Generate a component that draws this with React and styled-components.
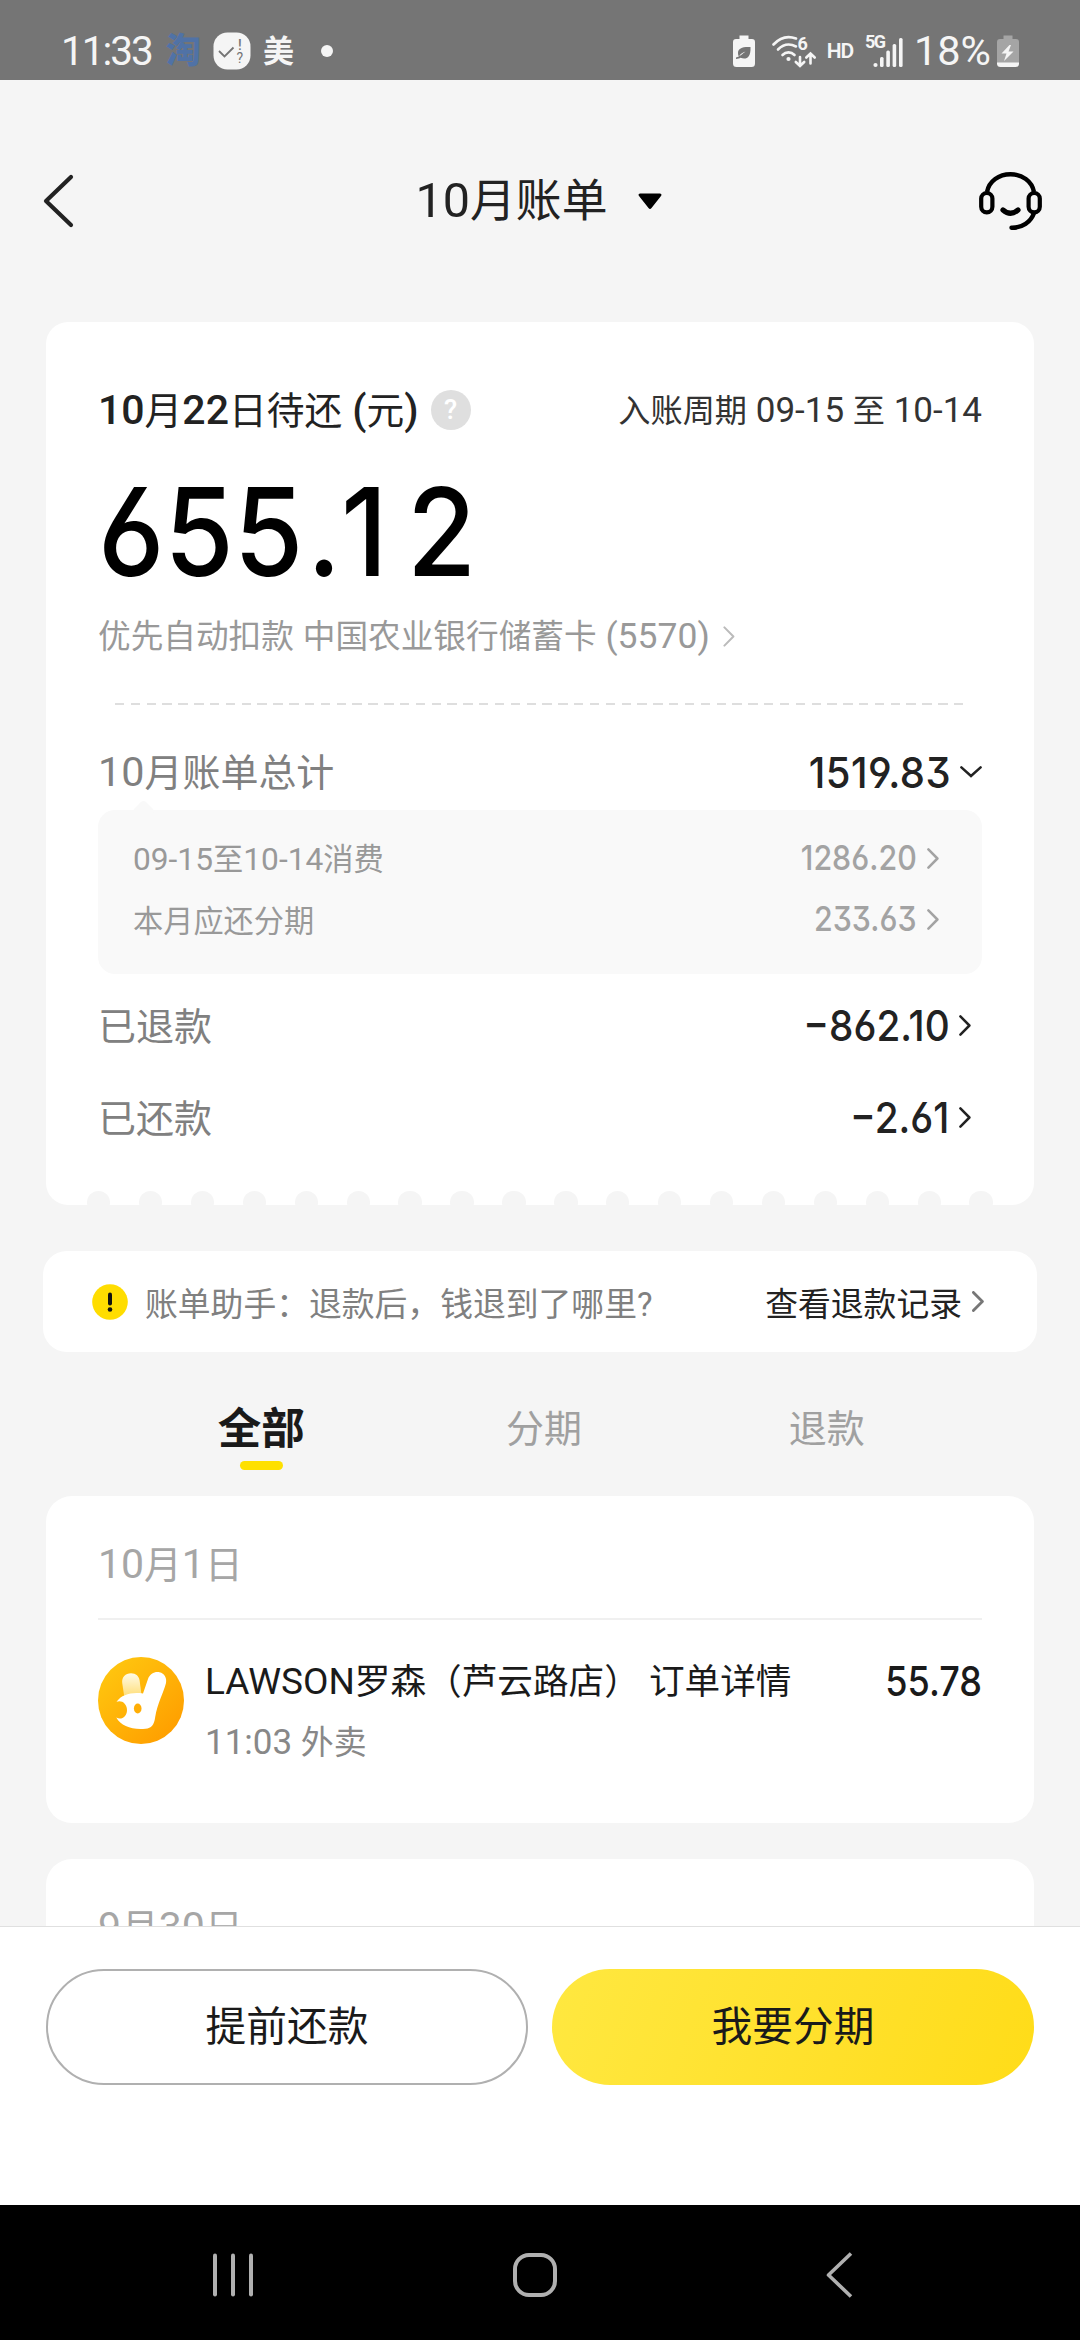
import { useState } from "react";
import styled, { createGlobalStyle } from "styled-components";

const GlobalStyle = createGlobalStyle`
  * {
    box-sizing: border-box;
  }
  body {
    margin: 0;
    background: #f5f5f5;
    font-family: Roboto, "Noto Sans CJK SC", sans-serif;
    color: #222;
  }
  svg {
    display: block;
    flex: none;
  }
`;

const Screen = styled.div`
  width: 1080px;
  height: 2340px;
  display: flex;
  flex-direction: column;
  overflow: hidden;
`;

/* ---------- text ---------- */
const Label = styled.span`
  font-size: ${(props) => props.$size}px;
  font-weight: ${(props) => props.$weight || 400};
  letter-spacing: ${(props) => props.$spacing || 0}px;
  color: ${(props) => props.$color || "#222"};
  padding-top: ${(props) => props.$drop || 0}px;
  line-height: 1.2;
  white-space: pre;
`;
const Han = styled.span`
  font-size: ${(props) => props.$ratio}em;
  font-weight: ${(props) => props.$weight || "inherit"};
`;
const Digits = styled.span`
  font-family: Inter, Roboto, sans-serif;
  font-feature-settings: "ss01";
  font-size: ${(props) => props.$size}px;
  font-weight: ${(props) => props.$weight || 500};
  letter-spacing: ${(props) => props.$spacing || 0}px;
  color: ${(props) => props.$color || "#222"};
  line-height: 1;
  white-space: nowrap;
  transform: scaleX(${(props) => props.$stretch || 0.9});
  transform-origin: right center;
`;
const Total = styled(Digits)`
  transform-origin: left center;
`;
const Cents = styled.span`
  letter-spacing: 21px;
`;
const Point = styled.span`
  margin-left: 4px;
`;

// Chinese runs are set a little smaller than the figures beside them
const Mixed = ({ children, ratio = 0.92, hanWeight, ...rest }) => (
  <Label {...rest}>
    {children.split(/([\u3000-\uffff]+)/).map((part, i) =>
      i % 2 ? (
        <Han key={i} $ratio={ratio} $weight={hanWeight}>
          {part}
        </Han>
      ) : (
        part
      )
    )}
  </Label>
);

/* ---------- status bar ---------- */
const StatusBar = styled.div`
  height: 80px;
  flex: none;
  background: #757575;
  display: flex;
  justify-content: space-between;
  padding: 22px 61px 0 61px;
`;
const StatusSide = styled.div`
  display: flex;
  align-items: center;
  height: 58px;
`;
const StatusText = styled.span`
  font-size: ${(props) => props.$size}px;
  font-weight: ${(props) => props.$weight || 400};
  letter-spacing: ${(props) => props.$spacing || 0}px;
  color: ${(props) => props.$color || "#f5f5f5"};
  line-height: 1;
  margin-left: ${(props) => props.$left || 0}px;
`;
const StatusIcon = styled.svg`
  margin-left: ${(props) => props.$left || 0}px;
`;
const Dot = styled.span`
  width: 12px;
  height: 12px;
  border-radius: 50%;
  background: #f5f5f5;
  margin-left: 27px;
`;

/* ---------- header ---------- */
const Content = styled.div`
  height: 1846px;
  flex: none;
  background: #f5f5f5;
  overflow: hidden;
`;
const Header = styled.div`
  height: 242px;
  display: flex;
  align-items: center;
  justify-content: space-between;
  padding: 0 37px 0 42px;
`;
const Title = styled.div`
  display: flex;
  align-items: center;
  gap: 30px;
  margin-left: 24px;
`;

/* ---------- cards ---------- */
const Card = styled.div`
  margin: 0 46px ${(props) => props.$bottom || 0}px;
  padding: 0 52px;
  background: #fff;
  border-radius: ${(props) => props.$radius}px;
  height: ${(props) => props.$height}px;
`;
const BillCard = styled(Card)`
  display: flex;
  flex-direction: column;
`;
const Row = styled.div`
  display: flex;
  align-items: center;
  flex: none;
  justify-content: space-between;
  height: ${(props) => props.$height}px;
  margin-top: ${(props) => props.$top || 0}px;
`;
const Inline = styled.div`
  display: flex;
  align-items: center;
  gap: ${(props) => props.$gap}px;
  padding-right: ${(props) => props.$right || 0}px;
`;
const Help = styled.span`
  width: 40px;
  height: 40px;
  border-radius: 50%;
  background: #dfdfdf;
  color: #fff;
  display: flex;
  align-items: center;
  justify-content: center;
  font-size: 27px;
  font-weight: 500;
  line-height: 1;
`;
const Dashes = styled.div`
  flex: none;
  height: 2px;
  width: 850px;
  margin: 45px 0 0 17px;
  background: repeating-linear-gradient(
    90deg,
    #dedede 0 9.4px,
    transparent 9.4px 15.83px
  );
`;
const Detail = styled.div`
  flex: none;
  position: relative;
  height: 164px;
  border-radius: 17px;
  background: #f9f9f9;
  padding: 18px 43px 0 35px;
  &::before {
    content: "";
    position: absolute;
    left: 37px;
    top: -7px;
    width: 17px;
    height: 17px;
    border-radius: 4px;
    background: #f9f9f9;
    transform: rotate(45deg);
  }
`;
const Teeth = styled.div`
  display: flex;
  flex: none;
  height: 14px;
  margin: auto -11px 0 -11px;
  justify-content: space-between;
  overflow: hidden;
`;
const Tooth = styled.span`
  width: 23.4px;
  height: 23.4px;
  border-radius: 50%;
  background: #f5f5f5;
`;

/* ---------- assistant + tabs ---------- */
const Assistant = styled.div`
  margin: 46px 43px 0;
  height: 101px;
  border-radius: 24px;
  background: #fff;
  display: flex;
  align-items: center;
  justify-content: space-between;
  padding: 0 53px 0 49px;
`;
const Tabs = styled.div`
  display: flex;
  height: 144px;
  padding: 52px 112px 0 120px;
`;
const Tab = styled.button`
  flex: 1;
  border: none;
  background: none;
  padding: ${(props) => (props.$active ? 3 : 2)}px 0 0;
  height: 66px;
  display: flex;
  flex-direction: column;
  align-items: center;
  justify-content: space-between;
  font-family: inherit;
  font-size: ${(props) => (props.$active ? 43.5 : 38)}px;
  font-weight: ${(props) => (props.$active ? 700 : 400)};
  color: ${(props) => (props.$active ? "#1a1a1a" : "#a0a0a0")};
  line-height: 46px;
  &::after {
    content: "";
    width: 43px;
    height: 9px;
    border-radius: 4.5px;
    background: ${(props) => (props.$active ? "#fee000" : "transparent")};
  }
`;

/* ---------- bill list ---------- */
const DateRow = styled.div`
  height: 124px;
  border-bottom: 2px solid #f0f0f0;
  display: flex;
  align-items: center;
  padding-top: 15px;
`;
const BillItem = styled.div`
  display: flex;
  padding-top: 37px;
`;
const ItemBody = styled.div`
  flex: 1;
  margin-left: 21px;
`;

/* ---------- footer ---------- */
const Footer = styled.div`
  height: 279px;
  flex: none;
  background: #fff;
  border-top: 1px solid #e0e0e0;
  display: flex;
  justify-content: space-between;
  padding: 42px 46px 0;
`;
const Button = styled.button`
  width: 482px;
  height: 116px;
  border-radius: 58px;
  border: ${(props) => (props.$primary ? "none" : "2px solid #b0b0b0")};
  background: ${(props) =>
    props.$primary
      ? "linear-gradient(110deg, #ffe840 0%, #ffe02a 60%, #ffdc18 100%)"
      : "#fff"};
  font-family: inherit;
  font-size: 40.7px;
  line-height: 1;
  color: #1a1a1a;
  padding: 1px 0 0;
`;
const NavBar = styled.div`
  height: 135px;
  flex: none;
  background: #000;
  display: flex;
  align-items: center;
  gap: 259px;
  padding: 4px 0 0 212px;
  svg:last-child {
    margin-left: 10px;
  }
`;

const Chevron = ({ color = "#222", width = 12, height = 21, stroke = 2.5 }) => (
  <svg width={width} height={height} viewBox="0 0 12 21" fill="none">
    <path
      d="M1.4 1.4L10.4 10.5L1.4 19.6"
      stroke={color}
      strokeWidth={stroke}
      strokeLinecap="round"
      strokeLinejoin="round"
    />
  </svg>
);

const ChevronDown = () => (
  <svg width="22" height="12" viewBox="0 0 22 12" fill="none">
    <path
      d="M1.4 1.4L11 10L20.6 1.4"
      stroke="#222"
      strokeWidth="2.5"
      strokeLinecap="round"
    />
  </svg>
);

const Headset = () => (
  <svg width="64" height="60" viewBox="0 0 64 60" fill="none" stroke="#000">
    <path d="M8 21C10 10 20 3.2 31.5 3.2S53 10 55 21" strokeWidth="4.4" />
    <rect x="2.2" y="22" width="11.2" height="19.4" rx="5.6" strokeWidth="4.2" />
    <rect x="49.6" y="22" width="11.2" height="19.4" rx="5.6" strokeWidth="4.2" />
    <path
      d="M55 42C52 51 43 57 32.5 56.8"
      strokeWidth="4.4"
      strokeLinecap="round"
    />
    <path
      d="M24 39Q31.5 45.5 39 39"
      strokeWidth="5.2"
      strokeLinecap="round"
    />
  </svg>
);

const Bunny = () => (
  <svg width="86" height="87" viewBox="0 0 86 87">
    <defs>
      <linearGradient id="disc" x1="0.1" y1="0.1" x2="0.85" y2="0.9">
        <stop offset="0" stopColor="#ffc60f" />
        <stop offset="1" stopColor="#ff9f00" />
      </linearGradient>
      <linearGradient id="ear" x1="0" y1="0" x2="0" y2="1">
        <stop offset="0" stopColor="#fffbe8" />
        <stop offset="1" stopColor="#ffdc70" />
      </linearGradient>
    </defs>
    <ellipse cx="43" cy="43.5" rx="43" ry="43.5" fill="url(#disc)" />
    <path
      d="M26.5 41L24.2 26C23.5 20 27.5 16.2 33 16.2C38 16.2 41 19 41.7 24L43.5 38Z"
      fill="url(#ear)"
    />
    <path
      d="M18.5 44.8C24 37.5 33 35 45 36.5L50 22C52 16.5 57 14.3 61.5 15.3C66.5 16.5 69 21 68 26C65.5 36 59.5 46 57.2 60C56 68.5 53.5 71.2 47.5 71.7C34 73 23 69 18.3 60.5C23 63.5 29 60 29 53C29 46.5 23.5 42.8 18.5 44.8Z"
      fill="#fff"
    />
    <ellipse cx="39.7" cy="51.5" rx="3.8" ry="4.9" fill="#ffae05" />
  </svg>
);

const Alert = () => (
  <svg width="36" height="36" viewBox="0 0 36 36">
    <circle cx="18" cy="18" r="17.8" fill="#fd0" />
    <path d="M18 10.5V19.5" stroke="#111" strokeWidth="4" strokeLinecap="round" />
    <circle cx="18" cy="25.5" r="2.3" fill="#111" />
  </svg>
);

const StatusLeft = () => (
  <StatusSide>
    <StatusText $size={40.5} $spacing={-2}>
      11:33
    </StatusText>
    <StatusText $size={35} $weight={900} $color="#5072a6" $left={14}>
      淘
    </StatusText>
    <StatusIcon $left={12} width="38" height="38" viewBox="0 0 38 38">
      <rect x="0.5" y="0.5" width="37" height="37" rx="14" fill="#f5f5f5" />
      <path d="M6 19L11.5 24.5L20.5 15.5" stroke="#757575" strokeWidth="1.8" fill="none" />
      <text x="25" y="18" fontSize="14" fontWeight="500" fill="#757575">!</text>
      <text x="23.5" y="31" fontSize="14" fill="#757575">?</text>
    </StatusIcon>
    <StatusText $size={31} $weight={700} $left={12}>
      美
    </StatusText>
    <Dot />
  </StatusSide>
);

const StatusRight = () => (
  <StatusSide>
    <svg width="22" height="32" viewBox="0 0 22 32">
      <path
        d="M6.5 0.5H15.5V4H19Q22 4 22 7V28.5Q22 32 18.5 32H3.5Q0 32 0 28.5V7Q0 4 3 4H6.5Z"
        fill="#f5f5f5"
      />
      <path
        d="M17.5 12C10 11.5 5 13 5 18C5 20 5.5 21 6 21.5C7.5 18.5 10 17.5 12.5 16.5C9 19 7.5 21.5 3 22.5V24C5 24 6.5 23.5 7.5 22.8C13 25 18 23 17.5 12Z"
        fill="#757575"
      />
    </svg>
    <StatusIcon
      $left={16}
      width="46"
      height="34"
      viewBox="0 0 46 34"
      fill="none"
      stroke="#f5f5f5"
      strokeWidth="2.6"
      strokeLinecap="round"
    >
      <path d="M2.5 10.5C9 3.5 17 1.5 25 4.5" />
      <path d="M7 15.5C12 10.5 18.5 9 25 12.5" />
      <path d="M11.5 21C15 17.5 20 17.5 23.5 21" />
      <circle cx="17.5" cy="25" r="1" strokeWidth="2.2" />
      <path d="M29 23V31.5M24.8 28L29 32L33.2 28" />
      <path d="M39.5 29.5V20M35.3 23.5L39.5 19.5L43.7 23.5" />
      <text x="26.5" y="15.5" fontSize="18" fontWeight="700" fill="#f5f5f5" stroke="none">
        6
      </text>
    </StatusIcon>
    <StatusText $size={21} $weight={600} $spacing={-1.2} $left={10}>
      HD
    </StatusText>
    <StatusIcon $left={12} width="40" height="44" viewBox="0 -4 40 44" fill="#f5f5f5">
      <text x="0" y="14.5" fontSize="18" fontWeight="700" textLength="21">
        5G
      </text>
      <circle cx="10.5" cy="32" r="2.1" />
      <rect x="15" y="24" width="3.6" height="10" rx="1.5" />
      <rect x="21.3" y="17.5" width="3.6" height="16.5" rx="1.5" />
      <rect x="27.6" y="11" width="3.6" height="23" rx="1.5" />
      <rect x="34" y="5" width="3.6" height="29" rx="1.5" />
    </StatusIcon>
    <StatusText $size={41.5} $left={9}>
      18%
    </StatusText>
    <StatusIcon $left={6} width="22" height="32" viewBox="0 0 22 32">
      <path
        d="M6.5 0.5H15.5V4H19Q22 4 22 7V28H0V7Q0 4 3 4H6.5Z"
        fill="#a5a5a5"
      />
      <path d="M0 27.5H22V28.5Q22 32 18.5 32H3.5Q0 32 0 28.5Z" fill="#f5f5f5" />
      <path d="M12.5 10L4.5 18.5H9.5L7 26L16.5 16.5H11.5L14 10Z" fill="#f5f5f5" />
    </StatusIcon>
  </StatusSide>
);

const tabs = ["全部", "分期", "退款"];

export default function App() {
  const [active, setActive] = useState(tabs[0]);

  return (
    <>
      <GlobalStyle />
      <Screen>
        <StatusBar>
          <StatusLeft />
          <StatusRight />
        </StatusBar>

        <Content>
          <Header>
            <svg width="32" height="54" viewBox="0 0 32 54" fill="none">
              <path
                d="M29 3L4 27L29 51"
                stroke="#222"
                strokeWidth="4.2"
                strokeLinecap="round"
                strokeLinejoin="round"
              />
            </svg>
            <Title>
              <Mixed $size={48.5} ratio={0.945}>
                10月账单
              </Mixed>
              <svg width="24" height="17" viewBox="0 0 24 17">
                <path
                  d="M2 0.5H22Q24.5 1 22.8 3.2L13.5 15Q12 17 10.5 15L1.2 3.2Q-0.5 1 2 0.5Z"
                  fill="#000"
                />
              </svg>
            </Title>
            <Headset />
          </Header>

          <BillCard $height={883} $radius={22}>
            <Row $height={50} $top={63}>
              <Inline $gap={12}>
                <Mixed $size={41} $weight={500} hanWeight={400} $drop={2}>
                  10月22日待还 (元)
                </Mixed>
                <Help>?</Help>
              </Inline>
              <Mixed $size={35} $color="#333" $drop={2}>
                入账周期 09-15 至 10-14
              </Mixed>
            </Row>
            <Row $height={122} $top={36}>
              <Total $size={122} $stretch={0.92} $color="#000">
                655<Point>.</Point>
                <Cents>12</Cents>
              </Total>
            </Row>
            <Row $height={44} $top={21}>
              <Inline $gap={13}>
                <Mixed $size={35.5} $color="#999">
                  优先自动扣款 中国农业银行储蓄卡 (5570)
                </Mixed>
                <Chevron color="#bbb" stroke={2} />
              </Inline>
            </Row>
            <Dashes />
            <Row $height={60} $top={37}>
              <Mixed $size={41.3} $color="#808080" $drop={2}>
                10月账单总计
              </Mixed>
              <Inline $gap={9}>
                <Digits $size={43} $stretch={0.93} $spacing={0.5}>
                  1519.83
                </Digits>
                <ChevronDown />
              </Inline>
            </Row>
            <Row $height={8} />
            <Detail>
              <Row $height={61}>
                <Mixed $size={31.7} ratio={0.955} $color="#999" $drop={4}>
                  09-15至10-14消费
                </Mixed>
                <Inline $gap={10}>
                  <Digits $size={34.5} $weight={500} $stretch={0.88} $color="#a3a3a3">
                    1286.20
                  </Digits>
                  <Chevron color="#a3a3a3" />
                </Inline>
              </Row>
              <Row $height={61}>
                <Label $size={30.2} $color="#999" $drop={5}>
                  本月应还分期
                </Label>
                <Inline $gap={10}>
                  <Digits $size={34.5} $weight={500} $stretch={0.88} $color="#a3a3a3">
                    233.63
                  </Digits>
                  <Chevron color="#a3a3a3" />
                </Inline>
              </Row>
            </Detail>
            <Row $height={92} $top={5}>
              <Label $size={38} $color="#808080" $drop={5}>
                已退款
              </Label>
              <Inline $gap={9} $right={11}>
                <Digits $size={43}>−862.10</Digits>
                <Chevron />
              </Inline>
            </Row>
            <Row $height={92}>
              <Label $size={38} $color="#808080" $drop={5}>
                已还款
              </Label>
              <Inline $gap={10} $right={11}>
                <Digits $size={43}>−2.61</Digits>
                <Chevron />
              </Inline>
            </Row>
            <Teeth>
              {Array.from({ length: 18 }, (_, i) => (
                <Tooth key={i} />
              ))}
            </Teeth>
          </BillCard>

          <Assistant>
            <Inline $gap={17}>
              <Alert />
              <Label $size={32.8} $color="#808080" $drop={8}>
                账单助手：退款后，钱退到了哪里?
              </Label>
            </Inline>
            <Inline $gap={10}>
              <Label $size={32.8} $drop={8}>
                查看退款记录
              </Label>
              <Chevron color="#777" stroke={2.8} />
            </Inline>
          </Assistant>

          <Tabs>
            {tabs.map((tab) => (
              <Tab
                key={tab}
                $active={tab === active}
                onClick={() => setActive(tab)}
              >
                {tab}
              </Tab>
            ))}
          </Tabs>

          <Card $height={327} $radius={26} $bottom={36}>
            <DateRow>
              <Mixed $size={41} $color="#a6a6a6">
                10月1日
              </Mixed>
            </DateRow>
            <BillItem>
              <Bunny />
              <ItemBody>
                <Row $height={48}>
                  <Mixed $size={37} ratio={0.963} $color="#1a1a1a" $drop={3}>
                    LAWSON罗森（芦云路店） 订单详情
                  </Mixed>
                  <Digits $size={41} $stretch={0.88} $color="#1a1a1a">
                    55.78
                  </Digits>
                </Row>
                <Row $height={48} $top={12}>
                  <Mixed $size={35} ratio={0.94} $color="#888" $drop={3}>
                    11:03 外卖
                  </Mixed>
                </Row>
              </ItemBody>
            </BillItem>
          </Card>

          <Card $height={327} $radius={26}>
            <DateRow>
              <Mixed $size={41} $color="#a6a6a6">
                9月30日
              </Mixed>
            </DateRow>
          </Card>
        </Content>

        <Footer>
          <Button>提前还款</Button>
          <Button $primary>我要分期</Button>
        </Footer>

        <NavBar>
          <svg width="42" height="44" viewBox="0 0 42 44" fill="#b0b0b0">
            <rect x="1" y="0.5" width="4" height="43" rx="2" />
            <rect x="19" y="0.5" width="4" height="43" rx="2" />
            <rect x="37" y="0.5" width="4" height="43" rx="2" />
          </svg>
          <svg width="44" height="44" viewBox="0 0 44 44" fill="none">
            <rect x="2" y="2" width="40" height="40" rx="14" stroke="#b0b0b0" strokeWidth="4" />
          </svg>
          <svg width="27" height="46" viewBox="0 0 27 46" fill="none">
            <path d="M25 1.5L2.5 23L25 44.5" stroke="#b0b0b0" strokeWidth="3.6" strokeLinejoin="round" />
          </svg>
        </NavBar>
      </Screen>
    </>
  );
}
